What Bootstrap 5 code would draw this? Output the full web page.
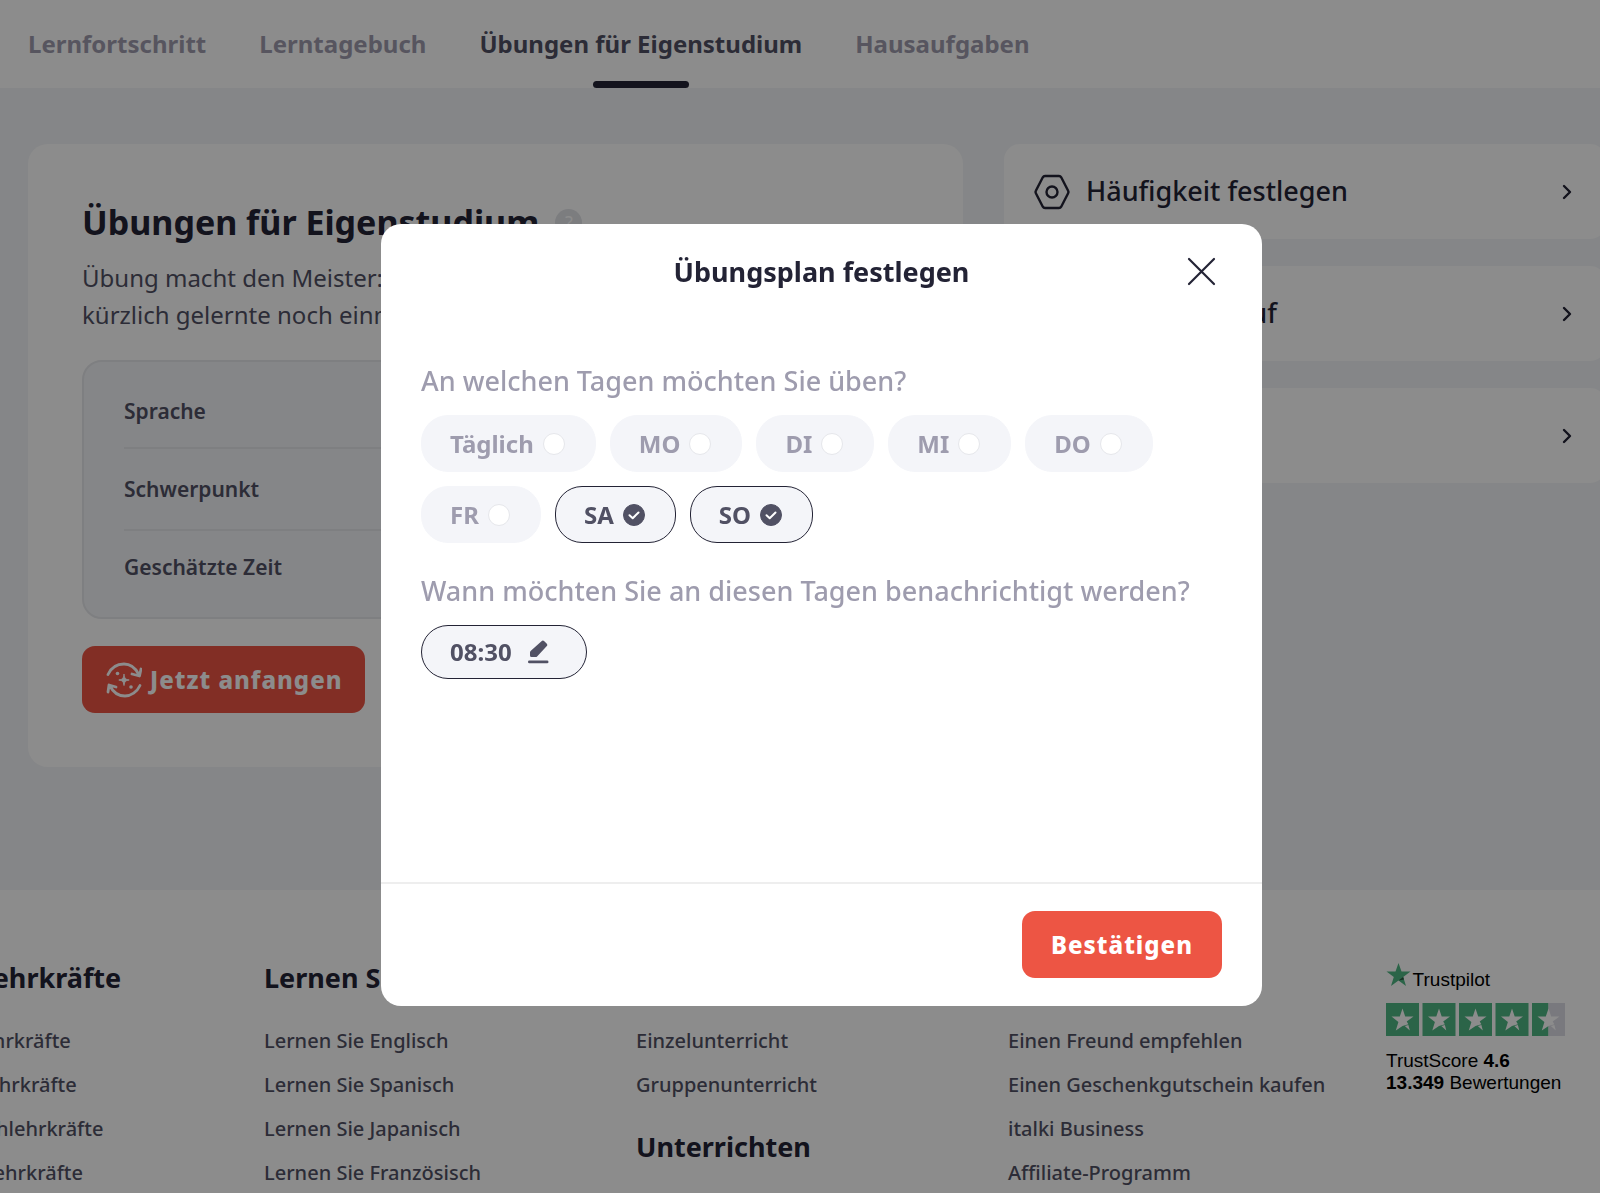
<!DOCTYPE html>
<html lang="de">
<head>
<meta charset="utf-8">
<meta name="viewport" content="width=device-width, initial-scale=1">
<title>Übungen für Eigenstudium</title>
<link href="https://cdn.jsdelivr.net/npm/bootstrap@5.3.0/dist/css/bootstrap.min.css" rel="stylesheet">
<style>
:root{--ink:#232335;--ink-2:#515164;--muted:#9e9cae;--soft:#f4f5f9;--page-bg:#f3f5f8;--line:#e6e7eb;--brand:#ed5544}
html,body{height:100%}
body{font-family:"Noto Sans",sans-serif;color:var(--ink);background:#fff;overflow:hidden}
a{text-decoration:none}
.page{min-height:100vh;overflow:hidden}
.tabs{height:88px;gap:53px;padding:0 28px}
.tabs .nav-link{position:relative;height:88px;padding:0;line-height:88px;font-size:24px;font-weight:700;color:var(--muted)}
.tabs .nav-link.active{color:var(--ink-2)}
.tabs .nav-link.active::after{content:"";position:absolute;left:50%;bottom:0;width:96px;margin-left:-48px;height:7px;border-radius:4px;background:var(--ink)}
.main-area{background:var(--page-bg);padding:56px 0 123px 28px;margin:0}
.main-grid{display:grid;grid-template-columns:935fr 602fr;gap:41px;margin-right:-6px}
.practice{background:#fff;border-radius:20px;padding:54px}
.practice h1{font-size:34px;line-height:48px;font-weight:700;margin:0}
.help-dot{width:27px;height:27px;border-radius:50%;background:#e2e3e8;color:#fff;font-size:18px;line-height:27px;text-align:center;border:0;padding:0}
.practice p{font-size:24px;line-height:37px;font-weight:400;color:var(--ink-2);margin:13px 0 27px}
.facts{background:var(--page-bg);border:2px solid var(--line);border-radius:20px;padding:10px 40px;margin:0 0 27px}
.facts dt{font-size:21px;line-height:30px;font-weight:600;color:var(--ink-2);padding:24px 0 21px}
.facts div + div{border-top:2px solid var(--line)}
.facts div:nth-child(2) dt{padding:25px 0}
.facts div:last-child dt{padding:21px 0 25px}
.btn-brand{--bs-btn-color:#fff;--bs-btn-bg:var(--brand);--bs-btn-border-color:var(--brand);--bs-btn-hover-bg:#d94535;--bs-btn-hover-color:#fff;height:67px;border-radius:13px;border-width:0;font-size:24px;font-weight:800;letter-spacing:1px;padding:0 29px}
.btn-start{padding:0 22px 0 24px}
.side-link{background:#fff;height:95px;border-radius:16px;padding:0 33px 0 30px;font-size:27px;font-weight:500;color:var(--ink)}
.side-stack{gap:27px}
.foot{padding:66px 35px 0 0;margin-left:-108px}
.foot h2{font-size:27px;line-height:44px;font-weight:700;margin:0 0 19px}
.foot-cols{display:grid;grid-template-columns:repeat(4,371px) 1fr;column-gap:1px}
.foot-first{padding-left:5px}
.foot li a{font-size:20px;line-height:44px;font-weight:500;color:var(--ink-2);white-space:nowrap}
.foot li{height:44px}
.foot ul{margin:0}
.foot ul + h2{margin-top:18px}
.trust{font-family:"Liberation Sans",Arial,sans-serif;font-size:19px;line-height:22px;color:#000;padding-top:7px;margin-left:6px}
.trust-star{margin-bottom:4px}
.star-row{margin:12px 0 14px}
.modal-layer{background:rgba(0,0,0,.45);padding-left:43px;overflow:hidden}
.modal-layer .modal-dialog{max-width:881px;margin:224px auto 0}
.modal-layer .modal-content{border:0;border-radius:20px;background:#fff;min-height:782px}
.modal-layer .modal-header{border:0;height:94px;padding:0 46px 0 40px;position:relative;justify-content:flex-end}
.modal-layer .modal-title{position:absolute;left:0;right:0;top:28px;text-align:center;font-size:27px;line-height:40px;font-weight:700;pointer-events:none}
.close-x{border:0;background:none;padding:0;line-height:0;color:var(--ink)}
.modal-layer .modal-body{padding:42px 40px 0;color:var(--muted)}
.question{font-size:27px;line-height:42px;font-weight:500;margin:0 0 13px}
.days + .question{margin-top:27px}
.days{gap:14px}
.chip{display:inline-flex;align-items:center;height:57px;border-radius:27px;background:var(--soft);border:1px solid var(--soft);padding:0 30px 0 28px;font-size:24px;font-weight:700;color:var(--muted);gap:9px;cursor:pointer}
.chip .form-check-input{width:22px;height:22px;margin:0;border:1px solid var(--line);border-radius:50%;background-color:#fff;flex:none}
.chip:has(:checked),.time-chip{border-color:var(--ink);color:var(--ink-2)}
.chip .form-check-input:checked{border-color:var(--ink-2);background-color:var(--ink-2);background-size:22px;background-image:url("data:image/svg+xml,%3csvg xmlns='http://www.w3.org/2000/svg' viewBox='0 0 22 22'%3e%3cpath fill='none' stroke='%23fff' stroke-width='2' stroke-linecap='round' stroke-linejoin='round' d='M6.500 11.200l3.200 3 5.800-5.700'/%3e%3c/svg%3e")}
.time-chip{height:54px;padding:0 37px 0 28px;gap:16px}
.modal-layer .modal-footer{border-top:2px solid #eee;padding:27px 40px;height:124px;align-items:flex-start}
.modal-layer .modal-footer > *{margin:0}
</style>
</head>
<body>
<svg width="0" height="0" class="position-absolute" aria-hidden="true">
  <symbol id="chev" viewBox="0 0 12 18"><path d="M3 3l6 6-6 6" fill="none" stroke="currentColor" stroke-width="2.400" stroke-linecap="round" stroke-linejoin="round"/></symbol>
</svg>
<div class="page d-flex flex-column">
  <nav class="nav tabs flex-nowrap" aria-label="Bereiche">
    <a class="nav-link" href="#">Lernfortschritt</a>
    <a class="nav-link" href="#">Lerntagebuch</a>
    <a class="nav-link active" href="#" aria-current="page">Übungen für Eigenstudium</a>
    <a class="nav-link" href="#">Hausaufgaben</a>
  </nav>

  <main class="main-area">
    <div class="main-grid">
      <section class="practice">
        <div class="d-flex align-items-center gap-3">
          <h1>Übungen für Eigenstudium</h1>
          <button type="button" class="help-dot" aria-label="Hilfe">?</button>
        </div>
        <p>Übung macht den Meister: Wiederholen Sie das<br>kürzlich gelernte noch einmal.</p>
        <dl class="facts">
          <div><dt>Sprache</dt></div>
          <div><dt>Schwerpunkt</dt></div>
          <div><dt>Geschätzte Zeit</dt></div>
        </dl>
        <button type="button" class="btn btn-brand btn-start d-inline-flex align-items-center gap-2">
          <svg width="36" height="36" viewBox="0 0 36 36" fill="none" stroke="#fff" stroke-width="2.800" stroke-linecap="round" stroke-linejoin="round" aria-hidden="true">
            <path d="M2 12.500C5 6 11 2 18 2c6 0 11 3.500 14.500 10M35 7l-1.500 7-7.500-2"/>
            <path d="M34 23.500C31 30 25 34 19 34c-6.500 0-12-4-15-10M2 30l1-7 7 2"/>
            <path d="M18 12.500c.5 4 1.500 5 5.200 5.500-3.700.5-4.700 1.500-5.200 5.500-.5-4-1.500-5-5.200-5.500 3.700-.5 4.700-1.500 5.200-5.500z" fill="#fff" stroke-width="1"/>
            <circle cx="11.500" cy="11.500" r="1.800" fill="#fff" stroke="none"/><circle cx="25" cy="25" r="1.800" fill="#fff" stroke="none"/>
          </svg>
          Jetzt anfangen</button>
      </section>

      <div class="side-stack d-flex flex-column">
        <a class="side-link d-flex align-items-center" href="#">
          <svg class="me-3" width="36" height="36" viewBox="0 0 36 36" fill="none" stroke="currentColor" stroke-width="2.400" stroke-linejoin="round" aria-hidden="true"><path d="M11 2h14a2.500 2.500 0 0 1 2.200 1.300L34 16.500a3 3 0 0 1 0 3l-6.800 13.200a2.500 2.500 0 0 1-2.200 1.300H11a2.500 2.500 0 0 1-2.200-1.300L2 19.500a3 3 0 0 1 0-3L8.800 3.300A2.500 2.500 0 0 1 11 2z"/><circle cx="18" cy="18" r="5.500"/></svg>
          Häufigkeit festlegen
          <svg class="ms-auto" width="12" height="18" aria-hidden="true"><use href="#chev"/></svg>
        </a>
        <a class="side-link d-flex align-items-center" href="#">
          <svg class="me-3" width="36" height="36" viewBox="0 0 36 36" fill="none" stroke="currentColor" stroke-width="2.400" aria-hidden="true"><circle cx="18" cy="18" r="15"/><path d="M18 9v9l6 4"/></svg>
          Übungsverlauf
          <svg class="ms-auto" width="12" height="18" aria-hidden="true"><use href="#chev"/></svg>
        </a>
        <a class="side-link d-flex align-items-center" href="#">
          <svg class="me-3" width="36" height="36" viewBox="0 0 36 36" fill="none" stroke="currentColor" stroke-width="2.400" aria-hidden="true"><rect x="5" y="4" width="26" height="28" rx="4"/><path d="M11 13h14M11 20h9"/></svg>
          Feedback
          <svg class="ms-auto" width="12" height="18" aria-hidden="true"><use href="#chev"/></svg>
        </a>
      </div>
    </div>
  </main>

  <footer class="foot">
    <div class="foot-cols">
      <div class="foot-first">
        <h2>Finde Lehrkräfte</h2>
        <ul class="list-unstyled">
          <li><a href="#">Englischlehrkräfte</a></li>
          <li><a href="#">Spanischlehrkräfte</a></li>
          <li><a href="#">Französischlehrkräfte</a></li>
          <li><a href="#">Japanischlehrkräfte</a></li>
        </ul>
      </div>
      <div>
        <h2>Lernen Sie</h2>
        <ul class="list-unstyled">
          <li><a href="#">Lernen Sie Englisch</a></li>
          <li><a href="#">Lernen Sie Spanisch</a></li>
          <li><a href="#">Lernen Sie Japanisch</a></li>
          <li><a href="#">Lernen Sie Französisch</a></li>
        </ul>
      </div>
      <div>
        <h2>Lernen</h2>
        <ul class="list-unstyled">
          <li><a href="#">Einzelunterricht</a></li>
          <li><a href="#">Gruppenunterricht</a></li>
        </ul>
        <h2>Unterrichten</h2>
      </div>
      <div>
        <h2>Mehr</h2>
        <ul class="list-unstyled">
          <li><a href="#">Einen Freund empfehlen</a></li>
          <li><a href="#">Einen Geschenkgutschein kaufen</a></li>
          <li><a href="#">italki Business</a></li>
          <li><a href="#">Affiliate-Programm</a></li>
        </ul>
      </div>
      <div class="trust">
        <div class="d-flex align-items-end">
          <svg class="trust-star" width="25" height="24" viewBox="0 0 25 24" aria-hidden="true"><path d="M12.500 0l3 8.500H24.500l-7.300 5.500 2.800 9-7.500-5.500L5 23l2.800-9L.5 8.500h9z" fill="#4fb783"/><path d="M17.200 14l.8 2.500-5.500 1z" fill="#28543f"/></svg>
          <span>&#8202;Trustpilot</span>
        </div>
        <svg class="star-row d-block" width="179" height="33" viewBox="0 0 179 33" role="img" aria-label="4,6 von 5 Sternen">
          <path d="M0 0h33v33H0zM36.500 0h33v33h-33zM73 0h33v33H73zM109.500 0h33v33h-33zM146 0h16.500v33H146z" fill="#4fb783"/><path d="M162.500 0H179v33h-16.500z" fill="#dcdce6"/>
          <g fill="#fff"><path id="s" d="M16.500 5.500l2.700 8h8.300l-6.800 5 1.700 2.700-5.900 1.800-6.700 4.500 2.600-8.500-6.900-5.500h8.300zM22.400 22l1.400 5.500-5-4.500z"/><use href="#s" x="36.500"/><use href="#s" x="73"/><use href="#s" x="109.500"/><use href="#s" x="146"/></g>
        </svg>
        <div>TrustScore <b>4.6</b></div>
        <div><b>13.349</b> Bewertungen</div>
      </div>
    </div>
  </footer>
</div>

<div class="modal modal-layer d-block" role="dialog" aria-modal="true" aria-labelledby="dlgTitle">
  <div class="modal-dialog">
    <form class="modal-content">
      <div class="modal-header">
        <h2 class="modal-title" id="dlgTitle">Übungsplan festlegen</h2>
        <button type="button" class="close-x" aria-label="Schließen"><svg width="29" height="29" viewBox="0 0 29 29" fill="none" stroke="currentColor" stroke-width="2.200" stroke-linecap="round"><path d="M2 2l25 25M27 2L2 27"/></svg></button>
      </div>
      <div class="modal-body">
        <p class="question">An welchen Tagen möchten Sie üben?</p>
        <div class="days d-flex flex-wrap" role="group" aria-label="Tage">
          <label class="chip">Täglich<input class="form-check-input" type="checkbox"></label>
          <label class="chip">MO<input class="form-check-input" type="checkbox"></label>
          <label class="chip">DI<input class="form-check-input" type="checkbox"></label>
          <label class="chip">MI<input class="form-check-input" type="checkbox"></label>
          <label class="chip">DO<input class="form-check-input" type="checkbox"></label>
          <label class="chip">FR<input class="form-check-input" type="checkbox"></label>
          <label class="chip">SA<input class="form-check-input" type="checkbox" checked></label>
          <label class="chip">SO<input class="form-check-input" type="checkbox" checked></label>
        </div>
        <p class="question">Wann möchten Sie an diesen Tagen benachrichtigt werden?</p>
        <button type="button" class="chip time-chip">08:30
          <svg width="21" height="24" viewBox="0 0 21 24" fill="#515164" aria-hidden="true"><path d="M13.500 1.200a2 2 0 0 1 2.800 0l2.300 2.300a2 2 0 0 1 0 2.800l-9.500 10.200a2 2 0 0 1-1.400.6H3.500a1.500 1.500 0 0 1-1.500-1.500v-3.200a2 2 0 0 1 .6-1.400z"/><rect x="0" y="20.500" width="20.500" height="2.800" rx="1.400"/></svg>
        </button>
      </div>
      <div class="modal-footer">
        <button type="submit" class="btn btn-brand">Bestätigen</button>
      </div>
    </form>
  </div>
</div>
<script src="https://cdn.jsdelivr.net/npm/bootstrap@5.3.0/dist/js/bootstrap.bundle.min.js"></script>
</body>
</html>
